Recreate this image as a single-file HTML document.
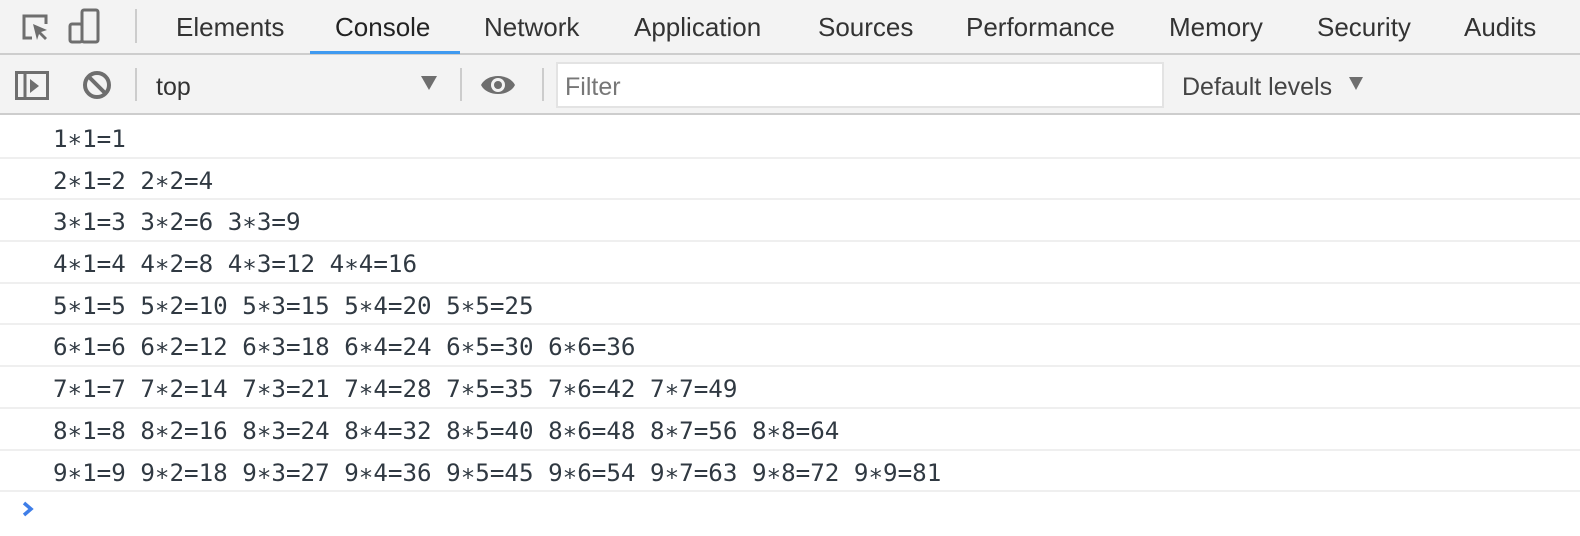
<!DOCTYPE html>
<html><head><style>
body{margin:0;width:1580px;height:536px;background:#fff;overflow:hidden;font-family:"Liberation Sans",sans-serif;position:relative}
.tabs{position:absolute;left:0;top:0;width:1580px;height:53px;background:#f3f3f3;border-bottom:2px solid #cdcdcd}
.tab{position:absolute;top:12px;font-size:26px;color:#333;}
.tb{position:absolute;left:0;top:55px;width:1580px;height:58px;background:#f3f3f3;border-bottom:2px solid #cdcdcd}
.sep{position:absolute;width:2px;background:#ccc}
.rows{position:absolute;left:0;top:117px;width:1580px}
.row{height:39.7px;border-bottom:2px solid #efefef;font-family:"DejaVu Sans Mono","Liberation Mono",monospace;font-size:24.2px;color:#303942;padding-left:53px;line-height:44px;white-space:pre}
</style></head><body>
<div class="tabs">
<svg style="position:absolute;left:18px;top:10px" width="36" height="36" viewBox="0 0 36 36"><path d="M14 28H6V6h22v8" fill="none" stroke="#6e6e6e" stroke-width="3"/><path d="M15 14l14 6-6 2 6 6-2 2-6-6-2 6z" fill="#6e6e6e"/></svg>
<svg style="position:absolute;left:68px;top:8px" width="36" height="38" viewBox="0 0 36 38"><rect x="14" y="2" width="16" height="32" rx="2" fill="none" stroke="#6e6e6e" stroke-width="3"/><rect x="2" y="16" width="12" height="18" rx="2" fill="#f3f3f3" stroke="#6e6e6e" stroke-width="3"/></svg>
<div class="sep" style="left:135px;top:9px;height:34px"></div>
<div class="tab" style="left:176px">Elements</div>
<div class="tab" style="left:335px;color:#222">Console</div>
<div style="position:absolute;left:310px;top:51px;width:150px;height:3px;background:#3f9af0"></div>
<div class="tab" style="left:484px">Network</div>
<div class="tab" style="left:634px">Application</div>
<div class="tab" style="left:818px">Sources</div>
<div class="tab" style="left:966px">Performance</div>
<div class="tab" style="left:1169px">Memory</div>
<div class="tab" style="left:1317px">Security</div>
<div class="tab" style="left:1464px">Audits</div>
</div>
<div class="tb">
<svg style="position:absolute;left:15px;top:16px" width="36" height="30" viewBox="0 0 36 30"><rect x="1.5" y="1.5" width="31" height="26" fill="none" stroke="#6e6e6e" stroke-width="3"/><line x1="10" y1="2" x2="10" y2="28" stroke="#6e6e6e" stroke-width="3"/><path d="M15 8l9 7-9 7z" fill="#6e6e6e"/></svg>
<svg style="position:absolute;left:81px;top:14px" width="32" height="32" viewBox="0 0 32 32"><circle cx="16" cy="16" r="12" fill="none" stroke="#6e6e6e" stroke-width="4"/><line x1="8" y1="8" x2="24" y2="24" stroke="#6e6e6e" stroke-width="4"/></svg>
<div class="sep" style="left:135px;top:13px;height:33px"></div>
<div style="position:absolute;left:156px;top:18px;font-size:25px;color:#333">top</div>
<div style="position:absolute;left:421px;top:21px;width:0;height:0;border-left:8px solid transparent;border-right:8px solid transparent;border-top:14px solid #6e6e6e"></div>
<div class="sep" style="left:460px;top:13px;height:33px"></div>
<svg style="position:absolute;left:480px;top:17px" width="36" height="26" viewBox="0 0 36 26"><path d="M1 13C7 1 29 1 35 13C29 25 7 25 1 13z" fill="#6e6e6e"/><circle cx="18" cy="13" r="7" fill="#f3f3f3"/><circle cx="18" cy="13" r="4" fill="#6e6e6e"/></svg>
<div class="sep" style="left:542px;top:13px;height:33px"></div>
<div style="position:absolute;left:556px;top:7px;width:604px;height:42px;background:#fff;border:2px solid #e3e3e3;"></div>
<div style="position:absolute;left:565px;top:18px;font-size:25px;color:#777">Filter</div>
<div style="position:absolute;left:1182px;top:18px;font-size:25px;color:#444">Default levels</div>
<div style="position:absolute;left:1349px;top:22px;width:0;height:0;border-left:7px solid transparent;border-right:7px solid transparent;border-top:13px solid #6e6e6e"></div>
</div>
<div class="rows">
<div class="row">1∗1=1</div>
<div class="row">2∗1=2 2∗2=4</div>
<div class="row">3∗1=3 3∗2=6 3∗3=9</div>
<div class="row">4∗1=4 4∗2=8 4∗3=12 4∗4=16</div>
<div class="row">5∗1=5 5∗2=10 5∗3=15 5∗4=20 5∗5=25</div>
<div class="row">6∗1=6 6∗2=12 6∗3=18 6∗4=24 6∗5=30 6∗6=36</div>
<div class="row">7∗1=7 7∗2=14 7∗3=21 7∗4=28 7∗5=35 7∗6=42 7∗7=49</div>
<div class="row">8∗1=8 8∗2=16 8∗3=24 8∗4=32 8∗5=40 8∗6=48 8∗7=56 8∗8=64</div>
<div class="row">9∗1=9 9∗2=18 9∗3=27 9∗4=36 9∗5=45 9∗6=54 9∗7=63 9∗8=72 9∗9=81</div>
</div>
<svg style="position:absolute;left:21px;top:501px" width="14" height="16" viewBox="0 0 14 16"><path d="M3 2l7 6-7 6" fill="none" stroke="#3f7ee8" stroke-width="3.5"/></svg>
</body></html>
